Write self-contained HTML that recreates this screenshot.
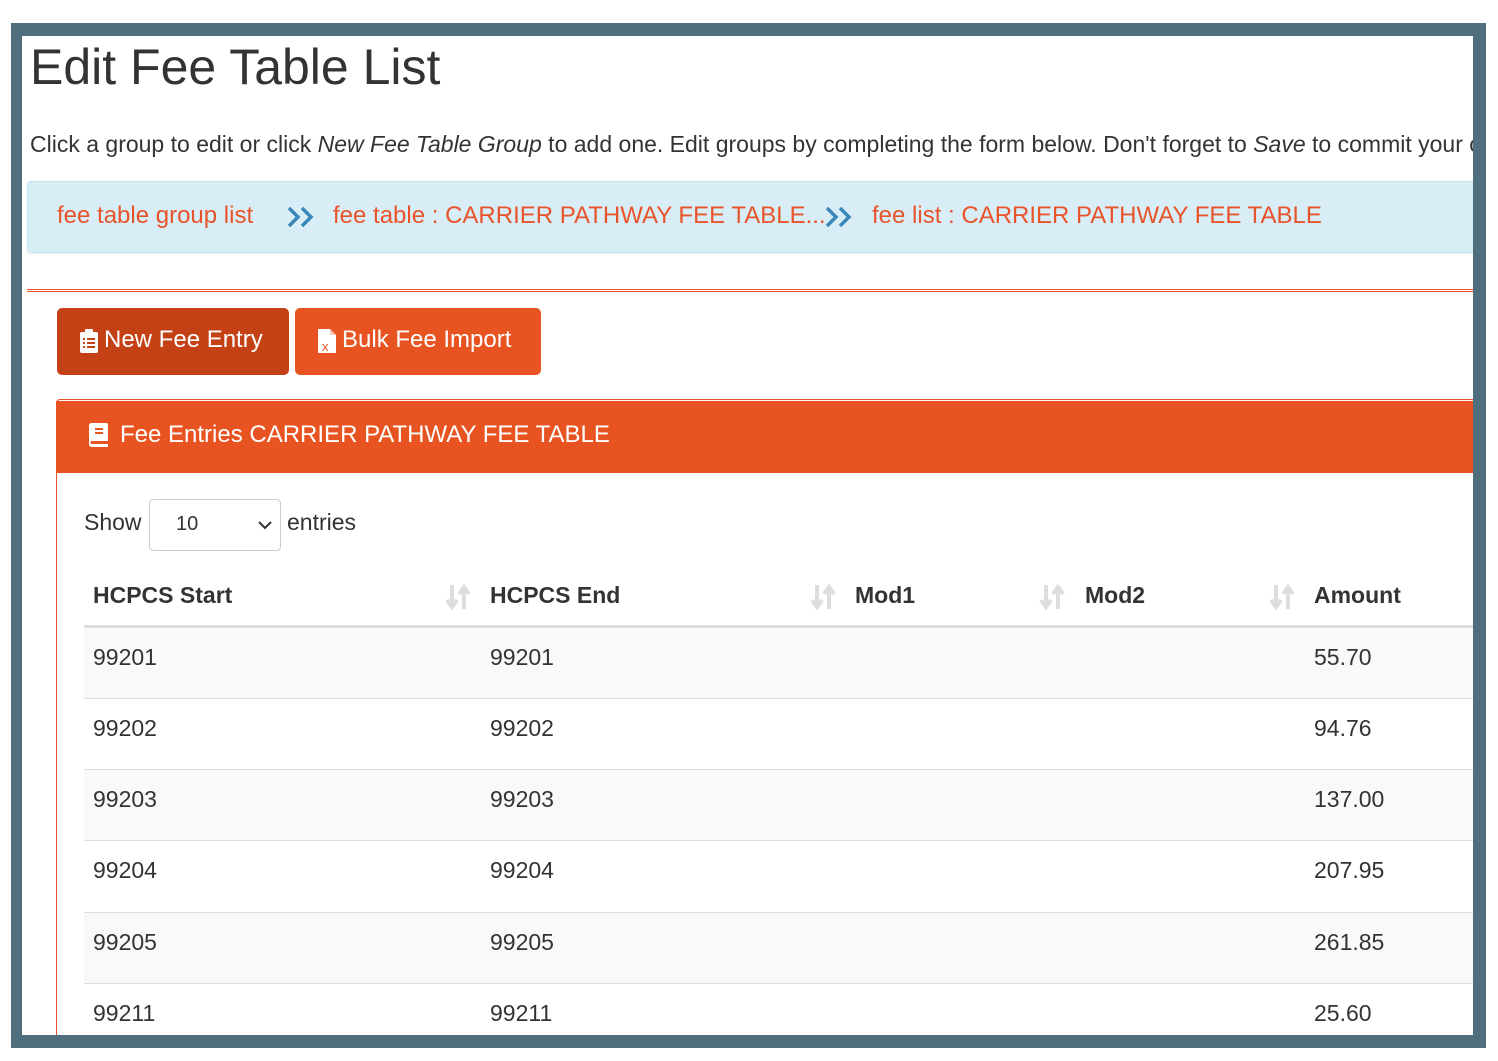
<!DOCTYPE html>
<html><head><meta charset="utf-8"><style>
*{margin:0;padding:0;box-sizing:border-box}
body{width:1498px;height:1061px;background:#fff;position:relative;overflow:hidden;font-family:"Liberation Sans",sans-serif;color:#333}
.frame{position:absolute;left:11px;top:23px;width:1475px;height:1025px;background:#4f6f7f}
.inner{position:absolute;left:22px;top:36px;width:1451px;height:999px;background:#fff;overflow:hidden}
.a{position:absolute;white-space:nowrap}
.or{color:#e8542a}
.sort{position:absolute;top:583px;width:26px;height:28px}
.row{position:absolute;left:62px;width:1400px;height:71px;border-top:1px solid #ddd}
.row span{position:absolute;top:16px;font-size:23px;color:#333}
</style></head><body>
<div class="frame"></div>
<div class="inner">
<div class="a" style="left:8px;top:2px;font-size:50px;color:#333">Edit Fee Table List</div>
<div class="a" style="left:8px;top:95px;font-size:23px;color:#333">Click a group to edit or click <i>New Fee Table Group</i> to add one. Edit groups by completing the form below. Don't forget to <i>Save</i> to commit your changes.</div>
<div class="a" style="left:5px;top:145px;width:1460px;height:72px;background:#d9edf7;border:1px solid #bce8f1;border-radius:4px;box-shadow:0 1px 2px rgba(0,0,0,.08)"></div>
<div class="a or" style="left:35px;top:166px;font-size:24px">fee table group list</div>
<svg class="a" style="left:264px;top:169px" width="32" height="24" viewBox="0 0 32 24"><path d="M3 3l9 9-9 9M16 3l9 9-9 9" fill="none" stroke="#3a87b8" stroke-width="3.5"/></svg>
<div class="a or" style="left:311px;top:166px;font-size:24px">fee table : CARRIER PATHWAY FEE TABLE...</div>
<svg class="a" style="left:802px;top:169px" width="32" height="24" viewBox="0 0 32 24"><path d="M3 3l9 9-9 9M16 3l9 9-9 9" fill="none" stroke="#3a87b8" stroke-width="3.5"/></svg>
<div class="a or" style="left:850px;top:166px;font-size:24px">fee list : CARRIER PATHWAY FEE TABLE</div>
<div class="a" style="left:5px;top:253px;width:1460px;height:3px;border-top:1px solid #e8542a;border-bottom:1px solid #e8542a"></div>
<div class="a" style="left:35px;top:272px;width:232px;height:67px;background:#c44116;border-radius:5px"></div>
<svg class="a" style="left:57px;top:292px" width="20" height="26" viewBox="0 0 20 26"><rect x="1" y="4" width="18" height="21" rx="2" fill="#fff"/><rect x="6" y="1" width="8" height="5" rx="1" fill="#fff"/><g fill="#c44116"><rect x="4" y="10" width="2" height="2"/><rect x="8" y="10" width="8" height="2"/><rect x="4" y="14" width="2" height="2"/><rect x="8" y="14" width="8" height="2"/><rect x="4" y="18" width="2" height="2"/><rect x="8" y="18" width="8" height="2"/></g></svg>
<div class="a" style="left:82px;top:290px;font-size:24px;color:#fff">New Fee Entry</div>
<div class="a" style="left:273px;top:272px;width:246px;height:67px;background:#e85421;border-radius:5px"></div>
<svg class="a" style="left:295px;top:292px" width="20" height="26" viewBox="0 0 20 26"><path d="M1 1h12l6 6v18H1z" fill="#fff"/><path d="M13 1v6h6" fill="#e85421" opacity=".3"/><text x="5" y="23" font-size="13" fill="#e85421" font-family="Liberation Sans">x</text></svg>
<div class="a" style="left:320px;top:290px;font-size:24px;color:#fff">Bulk Fee Import</div>
<div class="a" style="left:34px;top:363px;width:1420px;height:700px;border:1px solid #e8542a;border-radius:4px"></div>
<div class="a" style="left:34px;top:365px;width:1420px;height:72px;background:#e85421"></div>
<svg class="a" style="left:66px;top:386px" width="21" height="26" viewBox="0 0 21 26"><path d="M3 1h15a2 2 0 0 1 2 2v16H4a1.5 1.5 0 0 0 0 3h16v3H3a3 3 0 0 1-2-3V4a3 3 0 0 1 2-3z" fill="#fff"/><rect x="7" y="6" width="8" height="2" fill="#e85421"/><rect x="7" y="10" width="8" height="2" fill="#e85421"/></svg>
<div class="a" style="left:98px;top:385px;font-size:24px;color:#fff">Fee Entries CARRIER PATHWAY FEE TABLE</div>
<div class="a" style="left:62px;top:473px;font-size:23px">Show</div>
<div class="a" style="left:127px;top:463px;width:132px;height:52px;border:1px solid #ccc;border-radius:4px"></div>
<div class="a" style="left:154px;top:477px;font-size:20px">10</div>
<svg class="a" style="left:235px;top:484px" width="16" height="10" viewBox="0 0 16 10"><path d="M2 2l6 6 6-6" fill="none" stroke="#333" stroke-width="2"/></svg>
<div class="a" style="left:265px;top:473px;font-size:23px">entries</div>
<div class="a" style="left:71px;top:546px;font-size:23px;font-weight:bold">HCPCS Start</div>
<div class="a" style="left:468px;top:546px;font-size:23px;font-weight:bold">HCPCS End</div>
<div class="a" style="left:833px;top:546px;font-size:23px;font-weight:bold">Mod1</div>
<div class="a" style="left:1063px;top:546px;font-size:23px;font-weight:bold">Mod2</div>
<div class="a" style="left:1292px;top:546px;font-size:23px;font-weight:bold">Amount</div>
<svg class="sort" style="left:423px;top:547px" viewBox="0 0 26 28"><path d="M7 2v20M2 17l5 7 5-7M19 26V6M14 11l5-7 5 7" fill="none" stroke="#ddd" stroke-width="4"/></svg>
<svg class="sort" style="left:788px;top:547px" viewBox="0 0 26 28"><path d="M7 2v20M2 17l5 7 5-7M19 26V6M14 11l5-7 5 7" fill="none" stroke="#ddd" stroke-width="4"/></svg>
<svg class="sort" style="left:1017px;top:547px" viewBox="0 0 26 28"><path d="M7 2v20M2 17l5 7 5-7M19 26V6M14 11l5-7 5 7" fill="none" stroke="#ddd" stroke-width="4"/></svg>
<svg class="sort" style="left:1247px;top:547px" viewBox="0 0 26 28"><path d="M7 2v20M2 17l5 7 5-7M19 26V6M14 11l5-7 5 7" fill="none" stroke="#ddd" stroke-width="4"/></svg>
<div class="a" style="left:62px;top:589px;width:1400px;height:3px;background:#ddd"></div>
<div class="row" style="top:592px;background:#f9f9f9;border-top:none"><span style="left:9px">99201</span><span style="left:406px">99201</span><span style="left:1230px">55.70</span></div>
<div class="row" style="top:662px"><span style="left:9px">99202</span><span style="left:406px">99202</span><span style="left:1230px">94.76</span></div>
<div class="row" style="top:733px;background:#f9f9f9"><span style="left:9px">99203</span><span style="left:406px">99203</span><span style="left:1230px">137.00</span></div>
<div class="row" style="top:804px"><span style="left:9px">99204</span><span style="left:406px">99204</span><span style="left:1230px">207.95</span></div>
<div class="row" style="top:876px;background:#f9f9f9"><span style="left:9px">99205</span><span style="left:406px">99205</span><span style="left:1230px">261.85</span></div>
<div class="row" style="top:947px"><span style="left:9px">99211</span><span style="left:406px">99211</span><span style="left:1230px">25.60</span></div>
</div>
</body></html>
